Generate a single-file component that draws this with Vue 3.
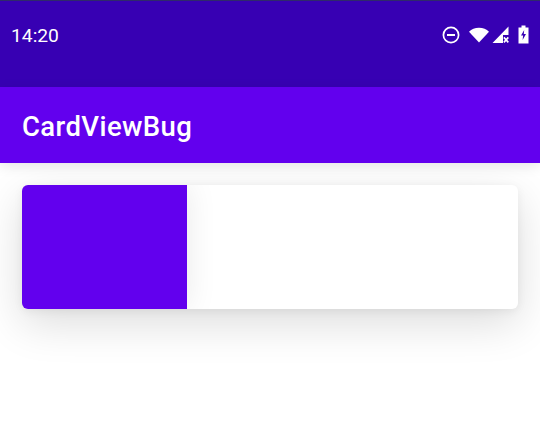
<template>
  <div class="screen">
    <header class="status">
      <span class="time">14:20</span>
      <div class="icons">
        <svg width="18" height="18" viewBox="0 0 18 18"><circle cx="9" cy="9" r="7.600" fill="none" stroke="#fff" stroke-width="1.700"/><rect x="5" y="8" width="8" height="2" fill="#fff"/></svg>
        <svg class="wifi" width="20" height="16" viewBox="0 0 21 16"><path d="M0 4.600C2.700 2 6.200.4 10.500.4S18.300 2 21 4.600L10.500 15.800z" fill="#fff"/></svg>
        <svg class="signal" width="18" height="18" viewBox="0 0 18 18"><path d="M.5 17 16.500.5V9H11v8z" fill="#fff"/><path d="M11.900 11.400l4.400 5M16.300 11.400l-4.400 5" stroke="#fff" stroke-width="1.600" fill="none"/></svg>
        <svg class="battery" width="11" height="19" viewBox="0 0 11 19"><path d="M3.500.5h4v2h3V18.500H.5V2.500h3z" fill="#fff"/><path d="M6.200 5 3 10.500h2.100L4.600 15 8 9H5.800z" fill="#3700b3"/></svg>
      </div>
    </header>
    <div class="toolbar">CardViewBug</div>
    <main class="content">
      <div class="card"><div class="swatch"></div></div>
    </main>
  </div>
</template>

<script setup>
</script>

<style>
html, body { margin: 0; background: #fff; }
</style>

<style scoped>
.screen {
  width: 540px;
  height: 426px;
  overflow: hidden;
  background: #fff;
  font-family: Roboto, "Liberation Sans", sans-serif;
  color: #fff;
}
.status {
  height: 87px;
  box-sizing: border-box;
  background: #3700b3;
  border-top: 1px solid #2f2a6b;
  padding: 0 11px 0 11px;
  display: flex;
  align-items: flex-start;
  justify-content: space-between;
}
.time {
  margin-top: 23px;
  font-size: 19.25px;
  line-height: 24px;
}
.icons {
  margin-top: 24px;
  display: flex;
  align-items: center;
}
.wifi { margin-left: 9px; }
.signal { margin-left: 3px; }
.battery { margin-left: 8px; }
.toolbar {
  height: 76px;
  box-sizing: border-box;
  padding-left: 22px;
  background: #6200ee;
  font-size: 27.5px;
  letter-spacing: 0.4px;
  font-weight: 500;
  line-height: 80px;
  position: relative;
  box-shadow: 0 3px 12px rgba(0, 0, 0, 0.1);
}
.content { padding: 22px; }
.card {
  height: 124px;
  border-radius: 6px;
  overflow: hidden;
  background: #fff;
  box-shadow: 0 14px 44px rgba(0, 0, 0, 0.14), 0 2px 10px rgba(0, 0, 0, 0.06);
}
.swatch {
  width: 165px;
  height: 100%;
  background: #6200ee;
  box-shadow: 0 0 30px rgba(0, 0, 0, 0.09);
}
</style>
